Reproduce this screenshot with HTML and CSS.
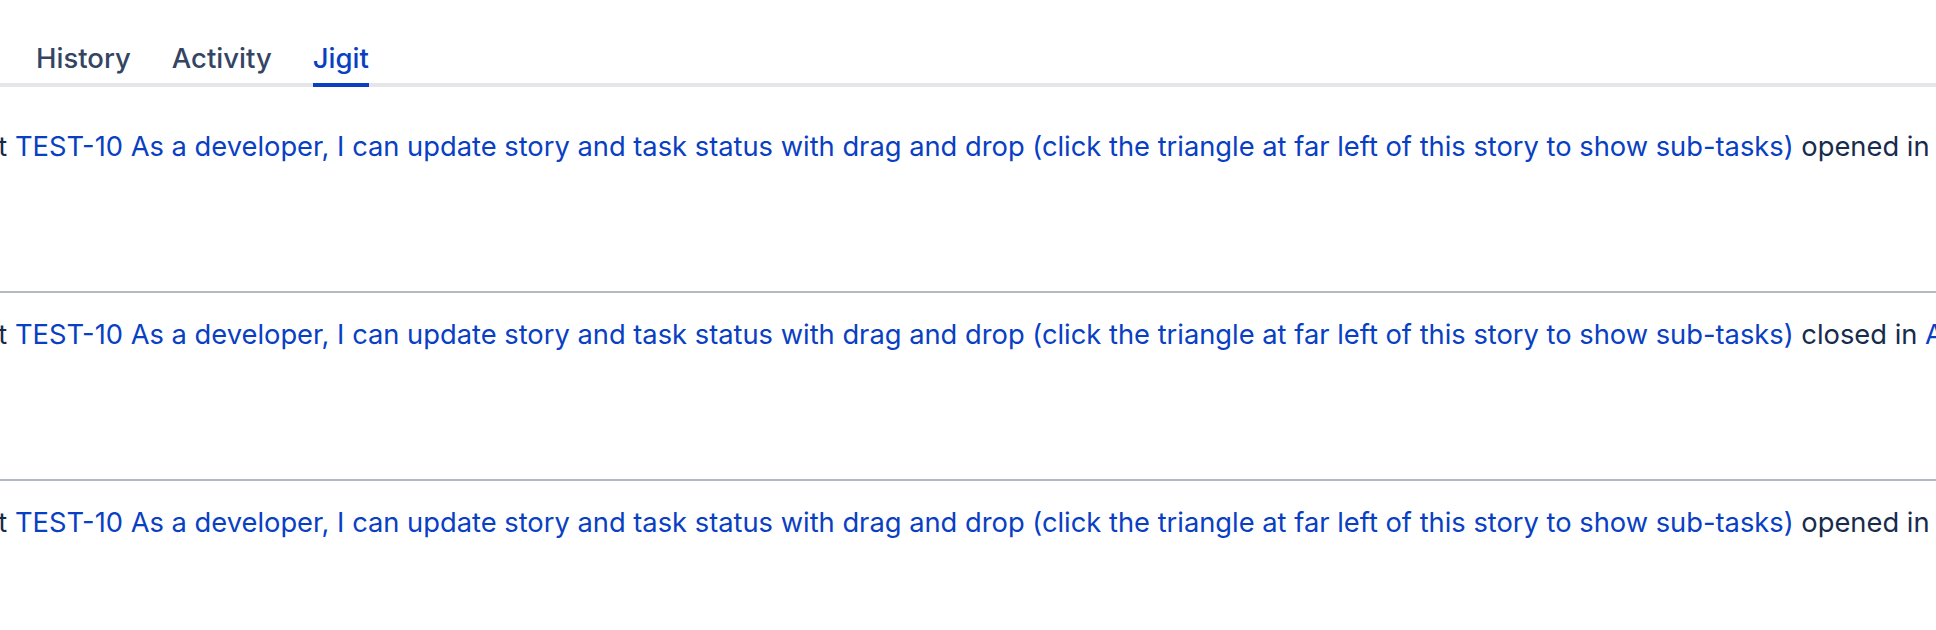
FILE: index.html
```html
<!DOCTYPE html>
<html>
<head>
    <meta charset="UTF-8">
    <title>Jigit</title>
    <link rel="stylesheet" href="styles.css">
</head>
<body>
    <div class="page">
        <div class="tabs">
            <a class="tab" href="#">History</a>
            <a class="tab" href="#">Activity</a>
            <a class="tab active" href="#">Jigit</a>
        </div>
        <ul class="events">
            <li class="event">
                <p class="line"><span class="lead">at</span> <a href="#">TEST-10 As a developer, I can update story and task status with drag and drop (click the triangle at far left of this story to show sub-tasks)</a> opened in <a href="#">Atlassian/test</a></p>
            </li>
            <li class="event">
                <p class="line"><span class="lead">at</span> <a href="#">TEST-10 As a developer, I can update story and task status with drag and drop (click the triangle at far left of this story to show sub-tasks)</a> closed in <a href="#">Atlassian/test</a></p>
            </li>
            <li class="event">
                <p class="line"><span class="lead">at</span> <a href="#">TEST-10 As a developer, I can update story and task status with drag and drop (click the triangle at far left of this story to show sub-tasks)</a> opened in <a href="#">Atlassian/test</a></p>
            </li>
        </ul>
    </div>
</body>
</html>
```

FILE: styles.css
```css
/* reset */
ul, li, p {
    margin: 0;
    padding: 0;
    list-style: none;
}

body {
    margin: 0;
    background: #fff;
    font-family: Inter, "Noto Sans", sans-serif;
    color: #172b4d;
}

a {
    text-decoration: none;
}

/* the panel is narrower than its lines, so clip them */
.page {
    width: 1936px;
    height: 630px;
    overflow: hidden;
}

/* tabs */
.tabs {
    display: flex;
    gap: 41px;
    padding: 0 0 0 36px;
    border-bottom: 4px solid #e4e6ea;
}

.tab {
    display: block;
    padding-top: 42px;
    padding-bottom: 9px;
    margin-bottom: -4px;
    border-bottom: 4px solid transparent;
    font-size: 27.5px;
    font-weight: 500;
    line-height: 32px;
    color: #344563;
}

.tab.active {
    color: #0940c3;
    border-bottom-color: #0940c3;
}

/* event list */
.events {
    margin-top: 18px;
}

.event {
    padding-top: 26px;
    height: 160px;
    border-bottom: 2px solid #b3b9c4;
}

.event:last-child {
    border-bottom: 0;
    height: 110px;
}

.line {
    margin-left: -17px;
    font-size: 27.3px;
    line-height: 32px;
    white-space: nowrap;
}

.line a {
    color: #0940c3;
}
```
